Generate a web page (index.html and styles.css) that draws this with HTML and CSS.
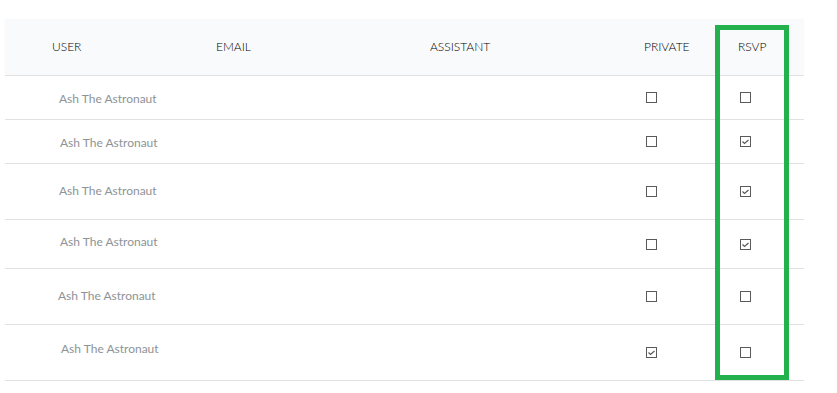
FILE: index.html
```html
<!DOCTYPE html>
<html>
<head>
<meta charset="utf-8">
<link rel="stylesheet" href="styles.css">
</head>
<body>
<div class="table">
  <div class="row head">
    <div class="cell c-user">USER</div>
    <div class="cell c-email">EMAIL</div>
    <div class="cell c-assist">ASSISTANT</div>
    <div class="cell c-priv">PRIVATE</div>
    <div class="cell c-rsvp">RSVP</div>
  </div>
  <div class="row r1">
    <div class="cell c-user"><span class="name">Ash The Astronaut</span></div>
    <div class="cell c-email"></div>
    <div class="cell c-assist"></div>
    <div class="cell c-priv"><span class="box"></span></div>
    <div class="cell c-rsvp"><span class="box"></span></div>
  </div>
  <div class="row r2">
    <div class="cell c-user"><span class="name">Ash The Astronaut</span></div>
    <div class="cell c-email"></div>
    <div class="cell c-assist"></div>
    <div class="cell c-priv"><span class="box"></span></div>
    <div class="cell c-rsvp"><span class="box"><svg class="tick" viewBox="0 0 9 9" width="9" height="9"><path d="M1.5 4.5 L3.5 6.5 L7.5 3" fill="none" stroke="#555" stroke-width="1.1"/></svg></span></div>
  </div>
  <div class="row r3">
    <div class="cell c-user"><span class="name">Ash The Astronaut</span></div>
    <div class="cell c-email"></div>
    <div class="cell c-assist"></div>
    <div class="cell c-priv"><span class="box"></span></div>
    <div class="cell c-rsvp"><span class="box"><svg class="tick" viewBox="0 0 9 9" width="9" height="9"><path d="M1.5 4.5 L3.5 6.5 L7.5 3" fill="none" stroke="#555" stroke-width="1.1"/></svg></span></div>
  </div>
  <div class="row r4">
    <div class="cell c-user"><span class="name">Ash The Astronaut</span></div>
    <div class="cell c-email"></div>
    <div class="cell c-assist"></div>
    <div class="cell c-priv"><span class="box"></span></div>
    <div class="cell c-rsvp"><span class="box"><svg class="tick" viewBox="0 0 9 9" width="9" height="9"><path d="M1.5 4.5 L3.5 6.5 L7.5 3" fill="none" stroke="#555" stroke-width="1.1"/></svg></span></div>
  </div>
  <div class="row r5">
    <div class="cell c-user"><span class="name">Ash The Astronaut</span></div>
    <div class="cell c-email"></div>
    <div class="cell c-assist"></div>
    <div class="cell c-priv"><span class="box"></span></div>
    <div class="cell c-rsvp"><span class="box"></span></div>
  </div>
  <div class="row r6">
    <div class="cell c-user"><span class="name">Ash The Astronaut</span></div>
    <div class="cell c-email"></div>
    <div class="cell c-assist"></div>
    <div class="cell c-priv"><span class="box"><svg class="tick" viewBox="0 0 9 9" width="9" height="9"><path d="M1.5 4.5 L3.5 6.5 L7.5 3" fill="none" stroke="#555" stroke-width="1.1"/></svg></span></div>
    <div class="cell c-rsvp"><span class="box"></span></div>
  </div>
  <div class="highlight"></div>
</div>
</body>
</html>
```

FILE: styles.css
```css
html, body {
  margin: 0;
  padding: 0;
  background: #ffffff;
}

body {
  font-family: Lato, "Open Sans", sans-serif;
  padding: 20px 33px 0 5px;
}

.table {
  position: relative;
  width: 799px;
}

.row {
  display: grid;
  grid-template-columns: 164px 214px 214px 94px 113px;
  align-items: center;
  border-bottom: 1px solid #e1e1e1;
}

.head {
  height: 55px;
  background: #f9fafc;
  box-shadow: 0 -1px 2px rgba(0, 0, 0, 0.03);
  font-size: 12px;
  font-weight: 300;
  color: #000000;
}

.head .cell {
  padding-bottom: 3px;
}

.cell {
  padding-left: 47px;
  display: flex;
  align-items: center;
}

.name {
  font-size: 12px;
  color: #8d9396;
}

.box {
  width: 9px;
  height: 9px;
  margin-left: 2px;
  border: 1px solid #5a5a5a;
  background: #fff;
  display: flex;
  align-items: center;
  justify-content: center;
}

.tick {
  display: block;
}

.r1 { height: 43px; }
.r2 { height: 43px; }
.r3 { height: 55px; }
.r4 { height: 48px; }
.r5 { height: 55px; }
.r6 { height: 55px; }

.r1 .c-user { padding-left: 54px; padding-top: 2px; }
.r2 .c-user { padding-left: 55px; padding-top: 2px; }
.r3 .c-user { padding-left: 54px; padding-bottom: 2px; }
.r4 .c-user { padding-left: 55px; padding-bottom: 6px; }
.r5 .c-user { padding-left: 53px; padding-bottom: 2px; }
.r6 .c-user { padding-left: 56px; padding-bottom: 8px; }

.highlight {
  position: absolute;
  left: 710px;
  top: 5px;
  width: 64px;
  height: 345px;
  border: 5px solid #22b14c;
  pointer-events: none;
}
```
